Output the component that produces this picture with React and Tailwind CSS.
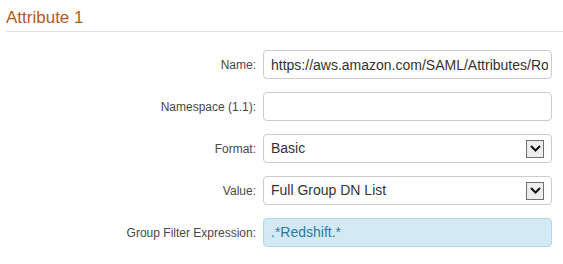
import React from 'react';

const Chevron = () => (
    <span className="flex items-center justify-center w-[18px] h-[18px] border border-[#6f6f6f] bg-[#ededed]">
        <svg width="11" height="7" viewBox="0 0 11 7">
            <path d="M1 1 L5.5 5.5 L10 1" fill="none" stroke="#111" strokeWidth="2" />
        </svg>
    </span>
);

const Label = ({ children }) => (
    <div className="flex items-center justify-end text-[12px] text-[#484848]">{children}</div>
);

const App = () => {
    return (
        <div className="w-[563px] h-[264px] bg-white pl-[6px] font-['Liberation_Sans',Arial,sans-serif]">
            <h1 className="pt-[8px] pb-[3px] text-[17px] leading-[20px] text-[#b7591b] border-b border-[#e3e3e3]">
                Attribute 1
            </h1>

            <div className="mt-[18px] grid grid-cols-[250px_289px] gap-x-[7px] gap-y-[13px]">
                <Label>Name:</Label>
                <input
                    type="text"
                    readOnly
                    value="https://aws.amazon.com/SAML/Attributes/Role"
                    className="h-[29px] w-full pl-[7px] pr-[3px] border border-[#cccccc] rounded-[4px] text-[14px] text-[#333] outline-none"
                />

                <Label>Namespace (1.1):</Label>
                <input type="text" readOnly value="" className="h-[29px] w-full border border-[#cccccc] rounded-[4px] outline-none" />

                <Label>Format:</Label>
                <div className="h-[29px] flex items-center justify-between pl-[7px] pr-[7px] border border-[#cccccc] rounded-[4px] text-[14px] text-[#333]">
                    <span>Basic</span>
                    <Chevron />
                </div>

                <Label>Value:</Label>
                <div className="h-[29px] flex items-center justify-between pl-[7px] pr-[7px] border border-[#cccccc] rounded-[4px] text-[14px] text-[#333]">
                    <span>Full Group DN List</span>
                    <Chevron />
                </div>

                <Label>Group Filter Expression:</Label>
                <div className="h-[29px] flex items-center px-[7px] border border-[#a9dbe9] bg-[#d3eaf5] rounded-[4px] text-[14px] text-[#2b7aa3]">
                    .*Redshift.*
                </div>
            </div>
        </div>
    );
};

export default App;
